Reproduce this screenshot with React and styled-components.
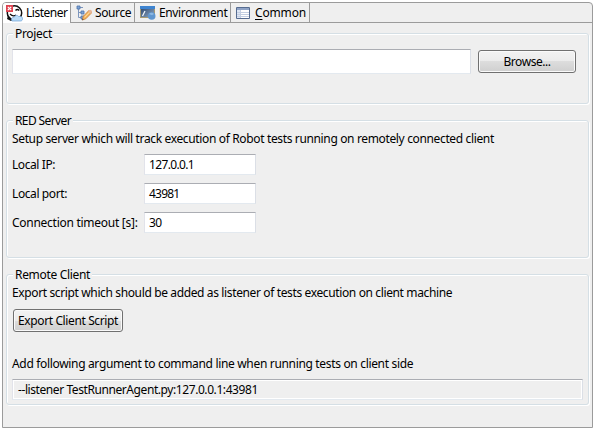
import React from 'react';
import styled, { createGlobalStyle } from 'styled-components';

const GlobalStyle = createGlobalStyle`
  * { box-sizing: border-box; }
  body { margin: 0; background: #fff; overflow: hidden; }
`;

const Page = styled.div`
  width: 595px;
  height: 432px;
  padding: 2px;
  font: 12px/16px "Noto Sans", "Open Sans", sans-serif;
  color: #000;
`;

const Folder = styled.div`
  width: 591px;
  height: 426px;
  border: 1px solid #9b9b9b;
  border-radius: 4px 4px 0 0;
  background: #efefef;
  overflow: hidden;
`;

const TabBar = styled.div`
  display: flex;
  height: 20px;
  border-bottom: 1px solid #9b9b9b;
`;

const Tab = styled.div`
  display: flex;
  align-items: flex-start;
  gap: ${(p) => p.$gap || 3}px;
  width: ${(p) => p.$width}px;
  height: ${(p) => (p.$active ? 20 : 19)}px;
  padding: 2px 0 0 ${(p) => (p.$active ? 3 : 5)}px;
  border-right: 1px solid #9b9b9b;
  background: ${(p) => (p.$active ? '#fff' : '#efefef')};

  svg { flex: none; }
`;

const Text = styled.span`
  white-space: pre;
  letter-spacing: ${(p) => p.$spacing || 0}px;
`;

const Mnemonic = styled.u`
  text-underline-offset: 2px;
  text-decoration-thickness: 1px;
  text-decoration-skip-ink: none;
`;

const Body = styled.div`
  display: flex;
  flex-direction: column;
  gap: 16px;
  padding: 10px 3px 0;
`;

const Group = styled.section`
  display: flex;
  flex-direction: column;
  align-items: flex-start;
  width: 583px;
  height: ${(p) => p.$height}px;
  padding-left: 5px;
  border: 1px solid #d5dfe5;
  border-radius: 3px;
  box-shadow: inset 1px 1px #fff, 1px 1px #fff;
`;

const Legend = styled.h2`
  margin: -8px 0 0 1px;
  padding: 0 2px;
  height: 16px;
  flex: none;
  font: inherit;
  background: #efefef;
`;

const ProjectRow = styled.div`
  display: flex;
  gap: 7px;
  margin-top: 7px;
`;

const Description = styled.p`
  height: 16px;
  margin: ${(p) => p.$top || 2}px 0 0;
`;

const Field = styled.div`
  display: flex;
  align-items: center;
  width: ${(p) => p.$width}px;
  height: ${(p) => p.$height || 21}px;
  padding-left: 4px;
  border: 1px solid;
  border-color: #abadb3 #dbdfe6 #e3e9ef #e2e3ea;
  background: #fff;
`;

const ReadOnlyField = styled(Field)`
  margin-top: 7px;
  padding-left: 5px;
  background: #efefef;
  box-shadow: inset 0 0 0 1px #fff;
`;

const Button = styled.button`
  display: flex;
  align-items: center;
  justify-content: center;
  width: ${(p) => p.$width}px;
  height: 23px;
  margin: ${(p) => p.$margin || '1px 0 0'};
  padding: 0;
  border: 1px solid #707070;
  border-radius: 3px;
  background: linear-gradient(#f2f2f2 0, #ebebeb 50%, #dddddd 50%, #cfcfcf 100%);
  box-shadow: inset 0 0 0 1px #fafafa;
  color: inherit;
  font: inherit;
`;

const Form = styled.div`
  display: grid;
  grid-template-columns: 132px 112px;
  row-gap: 8px;
  align-items: center;
  margin-top: 7px;
`;

function RobotIcon() {
  return (
    <svg width="17" height="17" viewBox="0 0 17 17">
      <circle cx="8.5" cy="8" r="7.2" fill="#fff" stroke="#111" strokeWidth="1.5" />
      <path d="M2 10.5L5 13l3 1.5L5 16l-4-2z" fill="#111" />
      <path d="M9.5 5.5q1.8-1.8 3.7 0" fill="none" stroke="#111" strokeWidth="1.4" />
      <path d="M4 9q3 3 6 1" fill="none" stroke="#111" strokeWidth="1.2" />
      <path d="M6 16c-1.6-2.5.3-4 2-3.5C8.8 9.8 12 10 12.7 11.5c2-.7 4 .5 3.8 2.3 0 1.4-.8 2.2-2 2.2z" fill="#b9dcf8" stroke="#6d9fd2" strokeWidth=".7" />
      <rect width="7" height="7" fill="#df4350" />
      <path d="M1.8 1.8l3.4 3.4M5.2 1.8L1.8 5.2" stroke="#fff" strokeWidth="1.2" />
    </svg>
  );
}

function SourceIcon() {
  return (
    <svg width="16" height="16" viewBox="0 0 16 16">
      <path d="M2.5 3v9.5H6M2.5 7.5H6M4 2.5h3" fill="none" stroke="#7d96bd" />
      <path d="M1 1h3v3H1zM5 6h3v3H5zM5 11h3v3H5z" fill="#7fa5d6" stroke="#4d72aa" strokeWidth=".8" />
      <path d="M6.3 15l1-3.7 5.8-6 2.5 2.5-5.8 6z" fill="#f4b45c" stroke="#c67b34" strokeWidth=".8" />
      <path d="M8.5 12.3l5.6-5.7" stroke="#ffe2a5" />
      <path d="M12.2 6.2l1.2-1.2q1.2-.5 2.2.6t0 2l-1.1 1.1z" fill="#e7b79b" />
      <path d="M6 15.2l.5-1.7 1.2 1.2z" fill="#555" />
    </svg>
  );
}

function EnvironmentIcon() {
  return (
    <svg width="16" height="16" viewBox="0 0 16 16">
      <defs>
        <linearGradient id="screen" x2="1" y2="1">
          <stop stopColor="#233f68" />
          <stop offset="1" stopColor="#96adc7" />
        </linearGradient>
      </defs>
      <rect x=".5" y="1.5" width="14" height="11" fill="url(#screen)" stroke="#a99b72" />
      <path d="M0 1h15v3H0z" fill="#3e84d0" />
      <path d="M2.5 11L5 6" stroke="#f3f7fc" strokeWidth="1.2" />
      <circle cx="11.7" cy="11" r="3.8" fill="#6096cf" />
      <path d="M9 9q2.5-2.4 5 0l-2 1.2z" fill="#8cb8e3" />
    </svg>
  );
}

function CommonIcon() {
  return (
    <svg width="15" height="15" viewBox="0 0 15 15">
      <path d="M.5 2.5h13v11H.5z" fill="#fff" stroke="#566c91" />
      <path d="M1 3h12v2H1z" fill="#8fa3c6" />
      <path d="M1 5h3v8H1z" fill="#dce5f3" />
      <path d="M4.5 5v8M1 7.5h12M1 9.5h12M1 11.5h12" stroke="#c3cee2" />
    </svg>
  );
}

export default function App() {
  return (
    <>
      <GlobalStyle />
      <Page>
        <Folder>
          <TabBar>
            <Tab $active $width={68}><RobotIcon /><Text $spacing={-0.5}>Listener</Text></Tab>
            <Tab $width={64}><SourceIcon /><Text $spacing={-0.38}>Source</Text></Tab>
            <Tab $width={96}><EnvironmentIcon /><Text $spacing={-0.37}>Environment</Text></Tab>
            <Tab $width={79} $gap={4}><CommonIcon /><Text $spacing={-0.16}><Mnemonic>C</Mnemonic>ommon</Text></Tab>
          </TabBar>
          <Body>
            <Group $height={71}>
              <Legend><Text $spacing={-0.31}>Project</Text></Legend>
              <ProjectRow>
                <Field $width={459} $height={25} />
                <Button $width={98}><Text $spacing={-0.46}>Browse...</Text></Button>
              </ProjectRow>
            </Group>
            <Group $height={138}>
              <Legend><Text $spacing={-0.61}>RED Server</Text></Legend>
              <Description><Text $spacing={-0.355}>Setup server which will track execution of Robot tests running on remotely connected client</Text></Description>
              <Form>
                <Text $spacing={-0.42}>Local IP:</Text>
                <Field $width={112}><Text $spacing={-0.65}>127.0.0.1</Text></Field>
                <Text $spacing={-0.4}>Local port:</Text>
                <Field $width={112}><Text $spacing={-0.8}>43981</Text></Field>
                <Text $spacing={-0.27}>Connection timeout [s]:</Text>
                <Field $width={112}><Text $spacing={-0.7}>30</Text></Field>
              </Form>
            </Group>
            <Group $height={131}>
              <Legend><Text $spacing={-0.32}>Remote Client</Text></Legend>
              <Description><Text $spacing={-0.37}>Export script which should be added as listener of tests execution on client machine</Text></Description>
              <Button $width={110} $margin="8px 0 0 1px"><Text $spacing={-0.38}>Export Client Script</Text></Button>
              <Description $top={24}><Text $spacing={-0.33}>Add following argument to command line when running tests on client side</Text></Description>
              <ReadOnlyField $width={571}><Text $spacing={-0.42}>--listener TestRunnerAgent.py:127.0.0.1:43981</Text></ReadOnlyField>
            </Group>
          </Body>
        </Folder>
      </Page>
    </>
  );
}
